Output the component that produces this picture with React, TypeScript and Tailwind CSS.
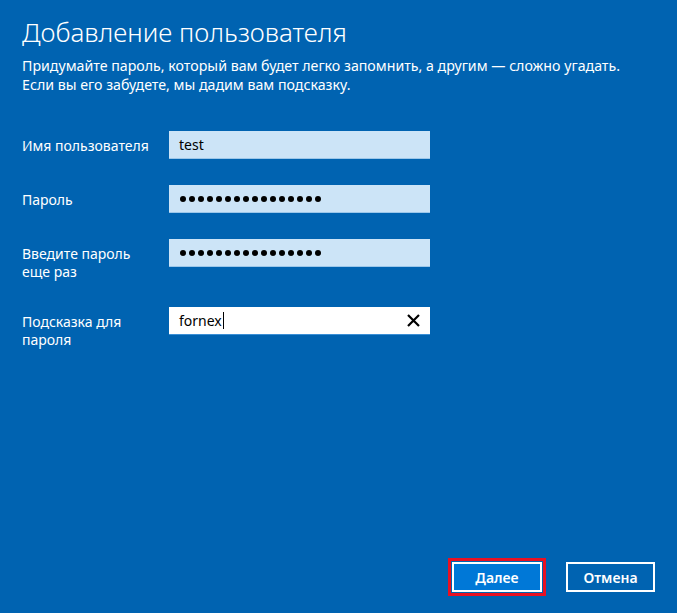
import React from "react";

const FONT = { fontFamily: '"Segoe UI", "Noto Sans", "Open Sans", sans-serif' };

function Field({ label, children }: { label: React.ReactNode; children: React.ReactNode }) {
  return (
    <div className="flex items-start">
      <div className="w-[147px] shrink-0 pt-[6px] pr-2 text-[14px] leading-[18px] text-white">{label}</div>
      {children}
    </div>
  );
}

function Dots() {
  return (
    <div className="flex items-center gap-[3px]">
      {Array.from({ length: 16 }).map((_, i) => (
        <span key={i} className="h-[6px] w-[6px] rounded-full bg-black" />
      ))}
    </div>
  );
}

export default function App() {
  return (
    <div style={FONT} className="flex h-[613px] w-[677px] flex-col bg-[#0063b1] px-[22px] pb-[17px] pt-[16px]">
      <h1 className="text-[26px] font-light leading-[32px] text-white">Добавление пользователя</h1>
      <p className="mt-[8px] text-[14.2px] leading-[19px] text-white">
        Придумайте пароль, который вам будет легко запомнить, а другим — сложно угадать.
        <br />
        Если вы его забудете, мы дадим вам подсказку.
      </p>

      <div className="mt-[37px] flex flex-col gap-[26px]">
        <Field label="Имя пользователя">
          <div className="flex h-[28px] w-[261px] items-center border-b border-[#9cc7ea] bg-[#cce4f7] px-[10px] text-[14px] text-black">
            test
          </div>
        </Field>
        <Field label="Пароль">
          <div className="flex h-[28px] w-[261px] items-center border-b border-[#9cc7ea] bg-[#cce4f7] px-[11px]">
            <Dots />
          </div>
        </Field>
        <Field
          label={
            <>
              Введите пароль
              <br />
              еще раз
            </>
          }
        >
          <div className="flex h-[28px] w-[261px] items-center border-b border-[#9cc7ea] bg-[#cce4f7] px-[11px]">
            <Dots />
          </div>
        </Field>
        <Field
          label={
            <>
              Подсказка для
              <br />
              пароля
            </>
          }
        >
          <div className="flex h-[28px] w-[261px] items-center justify-between border-b border-[#3a8fd6] bg-white pl-[10px] pr-[10px] text-[14px] text-black">
            <span className="flex items-center">
              fornex<span className="ml-[1px] inline-block h-[17px] w-[1px] bg-black" />
            </span>
            <svg width="13" height="13" viewBox="0 0 13 13" className="text-black">
              <path d="M1 1L12 12M12 1L1 12" stroke="currentColor" strokeWidth="2.2" />
            </svg>
          </div>
        </Field>
      </div>

      <div className="mt-auto flex items-center justify-end gap-[20px]">
        <div className="border-[3px] border-[#e81123] p-[1px]">
          <button className="h-[30px] w-[90px] border-2 border-white bg-[#0078d7] text-[14px] font-semibold text-white">
            Далее
          </button>
        </div>
        <button className="h-[30px] w-[89px] border-2 border-white bg-[#0063b1] text-[14px] font-semibold text-white">
          Отмена
        </button>
      </div>
    </div>
  );
}
